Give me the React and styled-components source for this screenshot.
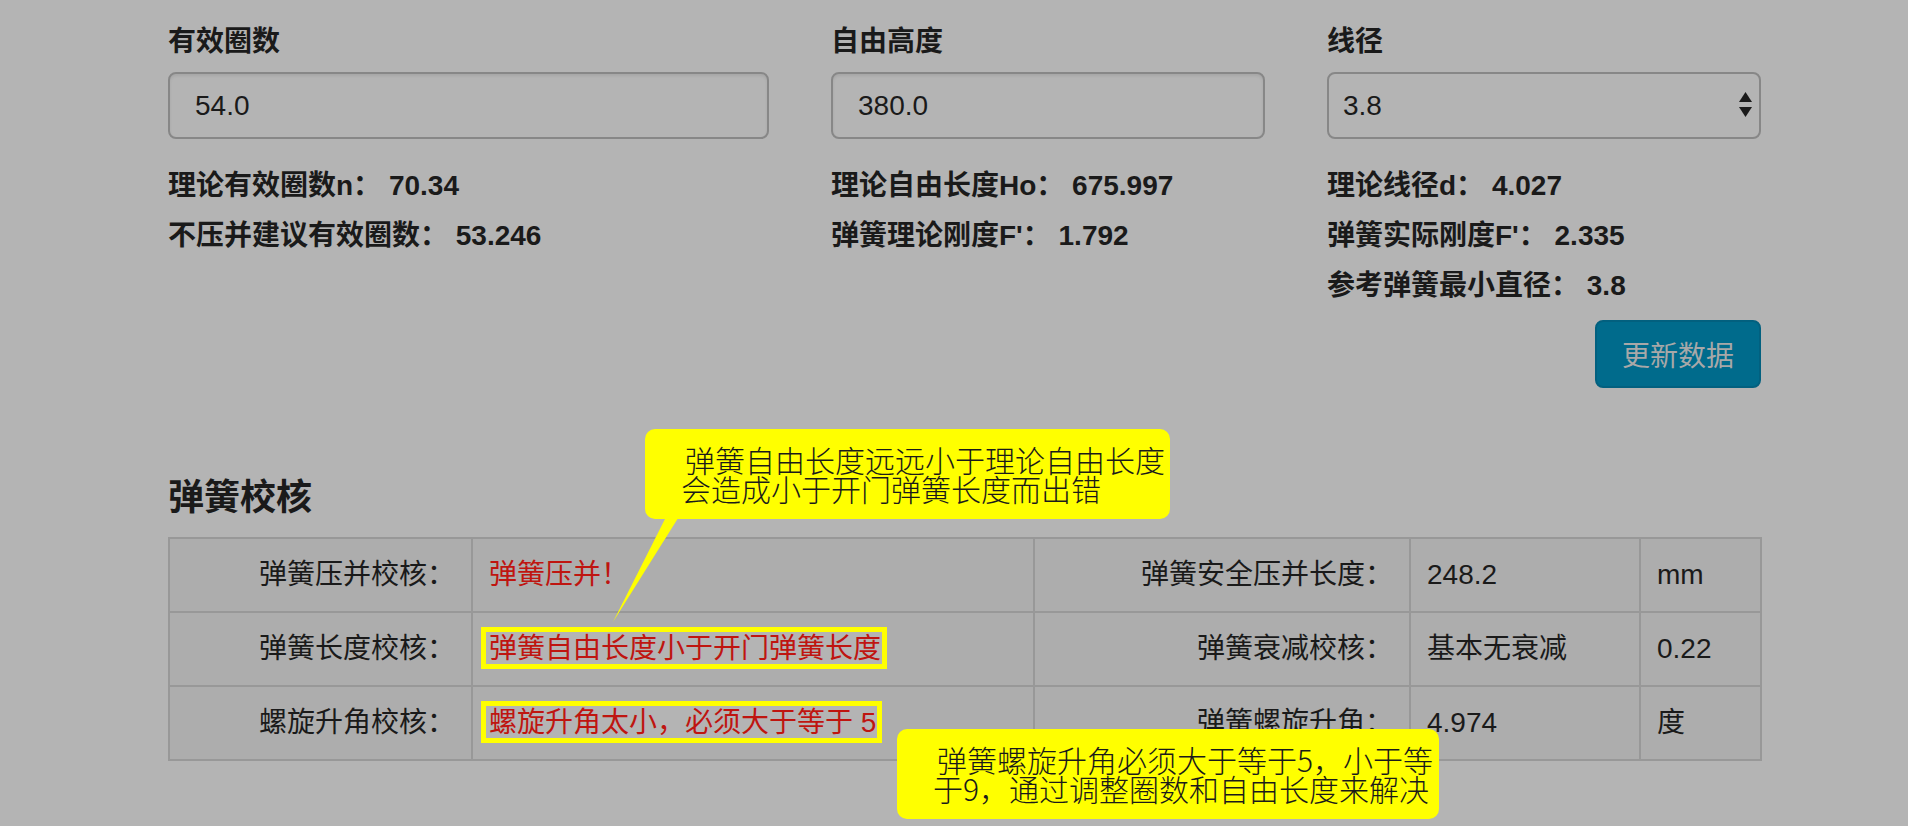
import React from 'react'
import styled, { createGlobalStyle } from 'styled-components'

const GlobalStyle = createGlobalStyle`
  body {
    margin: 0;
    background: #b4b4b4;
    color: #1a1a1a;
    font-family: "Liberation Sans", "Noto Sans CJK SC", sans-serif;
  }
`

const Page = styled.div`
  position: relative;
  box-sizing: border-box;
  width: 1908px;
  min-height: 826px;
  padding: 22px 0 0 168px;
`

const FieldGrid = styled.div`
  display: grid;
  grid-template-columns: 601px 434px 434px;
  column-gap: 62px;
  align-items: start;
`

const Field = styled.div`
  display: flex;
  flex-direction: column;
`

const Label = styled.div`
  font-size: 28px;
  font-weight: bold;
  line-height: 40px;
  margin-bottom: 10px;
`

const Input = styled.input`
  box-sizing: border-box;
  width: 100%;
  height: 67px;
  padding: 0 25px;
  border: 2px solid #878787;
  border-radius: 8px;
  background: #b4b4b4;
  box-shadow: inset 0 2px 3px rgba(0, 0, 0, 0.08);
  font-family: "Liberation Sans", sans-serif;
  font-size: 28px;
  color: #1a1a1a;
  outline: none;
`

const SelectWrap = styled.div`
  position: relative;
  height: 67px;
`

const Select = styled.select`
  appearance: none;
  box-sizing: border-box;
  width: 100%;
  height: 100%;
  padding: 0 14px;
  border: 2px solid #878787;
  border-radius: 8px;
  background: #b4b4b4;
  font-family: "Liberation Sans", sans-serif;
  font-size: 28px;
  color: #1a1a1a;
  outline: none;
`

const Arrows = styled.svg`
  position: absolute;
  right: 9px;
  top: 20px;
  pointer-events: none;
`

const Results = styled.div`
  margin-top: 22px;
`

const ResultLine = styled.div`
  font-size: 28px;
  font-weight: bold;
  line-height: 50px;
  white-space: nowrap;
`

const ButtonRow = styled.div`
  display: flex;
  justify-content: flex-end;
  margin-top: 9px;
`

const Button = styled.button`
  height: 68px;
  padding: 0 25px;
  border: 2px solid #02607f;
  border-radius: 8px;
  background: #006b8c;
  color: #a8a8a8;
  font-family: "Liberation Sans", "Noto Sans CJK SC", sans-serif;
  font-size: 28px;
  cursor: pointer;
`

const Heading = styled.h4`
  margin: 90px 0 19px;
  font-size: 36px;
  font-weight: bold;
  line-height: 40px;
`

const CheckTable = styled.table`
  width: 1592px;
  table-layout: fixed;
  border-collapse: collapse;
  background: #adadad;
  font-size: 28px;

  td {
    border: 2px solid #989898;
    padding: 16px;
    line-height: 40px;
    white-space: nowrap;
  }
`

const Cell = styled.td`
  text-align: ${p => (p.$right ? 'right' : 'left')};
  color: ${p => (p.$red ? '#bf1510' : '#1a1a1a')};
`

const Flag = styled.span`
  position: relative;
  z-index: 0;

  &::after {
    content: '';
    position: absolute;
    z-index: -1;
    top: -6px;
    bottom: -5px;
    left: -8px;
    right: -6px;
    border: 5px solid #ffff00;
    background: #b4b4b4;
  }
`

const Callout = styled.div`
  position: absolute;
  left: ${p => p.$x}px;
  top: ${p => p.$y}px;
  width: ${p => p.$w}px;
  box-sizing: border-box;
  padding: 16px 0 16px 36px;
  background: #ffff00;
  border-radius: 10px;
  font-family: "Noto Sans CJK SC", sans-serif;
  font-weight: 300;
  font-size: 30px;
  line-height: 29px;
  color: #1a1a1a;
  white-space: nowrap;
  text-indent: 4px;
  z-index: 2;
`

const Tail = styled.svg`
  position: absolute;
  left: 610px;
  top: 515px;
  z-index: 2;
`

const rows = [
  {
    label: '弹簧压并校核：',
    result: '弹簧压并！',
    flagged: false,
    label2: '弹簧安全压并长度：',
    value: '248.2',
    unit: 'mm',
  },
  {
    label: '弹簧长度校核：',
    result: '弹簧自由长度小于开门弹簧长度',
    flagged: true,
    label2: '弹簧衰减校核：',
    value: '基本无衰减',
    unit: '0.22',
  },
  {
    label: '螺旋升角校核：',
    result: '螺旋升角太小，必须大于等于 5',
    flagged: true,
    label2: '弹簧螺旋升角：',
    value: '4.974',
    unit: '度',
  },
]

export default function App() {
  return (
    <Page>
      <GlobalStyle />
      <FieldGrid>
        <Field>
          <Label>有效圈数</Label>
          <Input defaultValue="54.0" />
          <Results>
            <ResultLine>理论有效圈数n： 70.34</ResultLine>
            <ResultLine>不压并建议有效圈数： 53.246</ResultLine>
          </Results>
        </Field>
        <Field>
          <Label>自由高度</Label>
          <Input defaultValue="380.0" />
          <Results>
            <ResultLine>理论自由长度Ho： 675.997</ResultLine>
            <ResultLine>弹簧理论刚度F'： 1.792</ResultLine>
          </Results>
        </Field>
        <Field>
          <Label>线径</Label>
          <SelectWrap>
            <Select defaultValue="3.8">
              <option>3.5</option>
              <option>3.8</option>
              <option>4.0</option>
            </Select>
            <Arrows width="13" height="26" viewBox="0 0 13 26">
              <polygon points="0,10 6.5,0 13,10" fill="#1a1a1a" />
              <polygon points="0,15 13,15 6.5,25" fill="#1a1a1a" />
            </Arrows>
          </SelectWrap>
          <Results>
            <ResultLine>理论线径d： 4.027</ResultLine>
            <ResultLine>弹簧实际刚度F'： 2.335</ResultLine>
            <ResultLine>参考弹簧最小直径： 3.8</ResultLine>
          </Results>
          <ButtonRow>
            <Button>更新数据</Button>
          </ButtonRow>
        </Field>
      </FieldGrid>

      <Heading>弹簧校核</Heading>
      <CheckTable>
        <colgroup>
          <col style={{ width: 303 }} />
          <col style={{ width: 562 }} />
          <col style={{ width: 376 }} />
          <col style={{ width: 230 }} />
          <col style={{ width: 121 }} />
        </colgroup>
        <tbody>
          {rows.map(r => (
            <tr key={r.label}>
              <Cell $right>{r.label}</Cell>
              <Cell $red>{r.flagged ? <Flag>{r.result}</Flag> : r.result}</Cell>
              <Cell $right>{r.label2}</Cell>
              <Cell>{r.value}</Cell>
              <Cell>{r.unit}</Cell>
            </tr>
          ))}
        </tbody>
      </CheckTable>

      <Callout $x={645} $y={429} $w={525}>
        弹簧自由长度远远小于理论自由长度
        <br />
        会造成小于开门弹簧长度而出错
      </Callout>
      <Tail width="75" height="110" viewBox="0 0 75 110">
        <polygon points="57,0 70,0 3,107" fill="#ffff00" />
      </Tail>
      <Callout $x={897} $y={729} $w={542}>
        弹簧螺旋升角必须大于等于5，小于等
        <br />
        于9，通过调整圈数和自由长度来解决
      </Callout>
    </Page>
  )
}
